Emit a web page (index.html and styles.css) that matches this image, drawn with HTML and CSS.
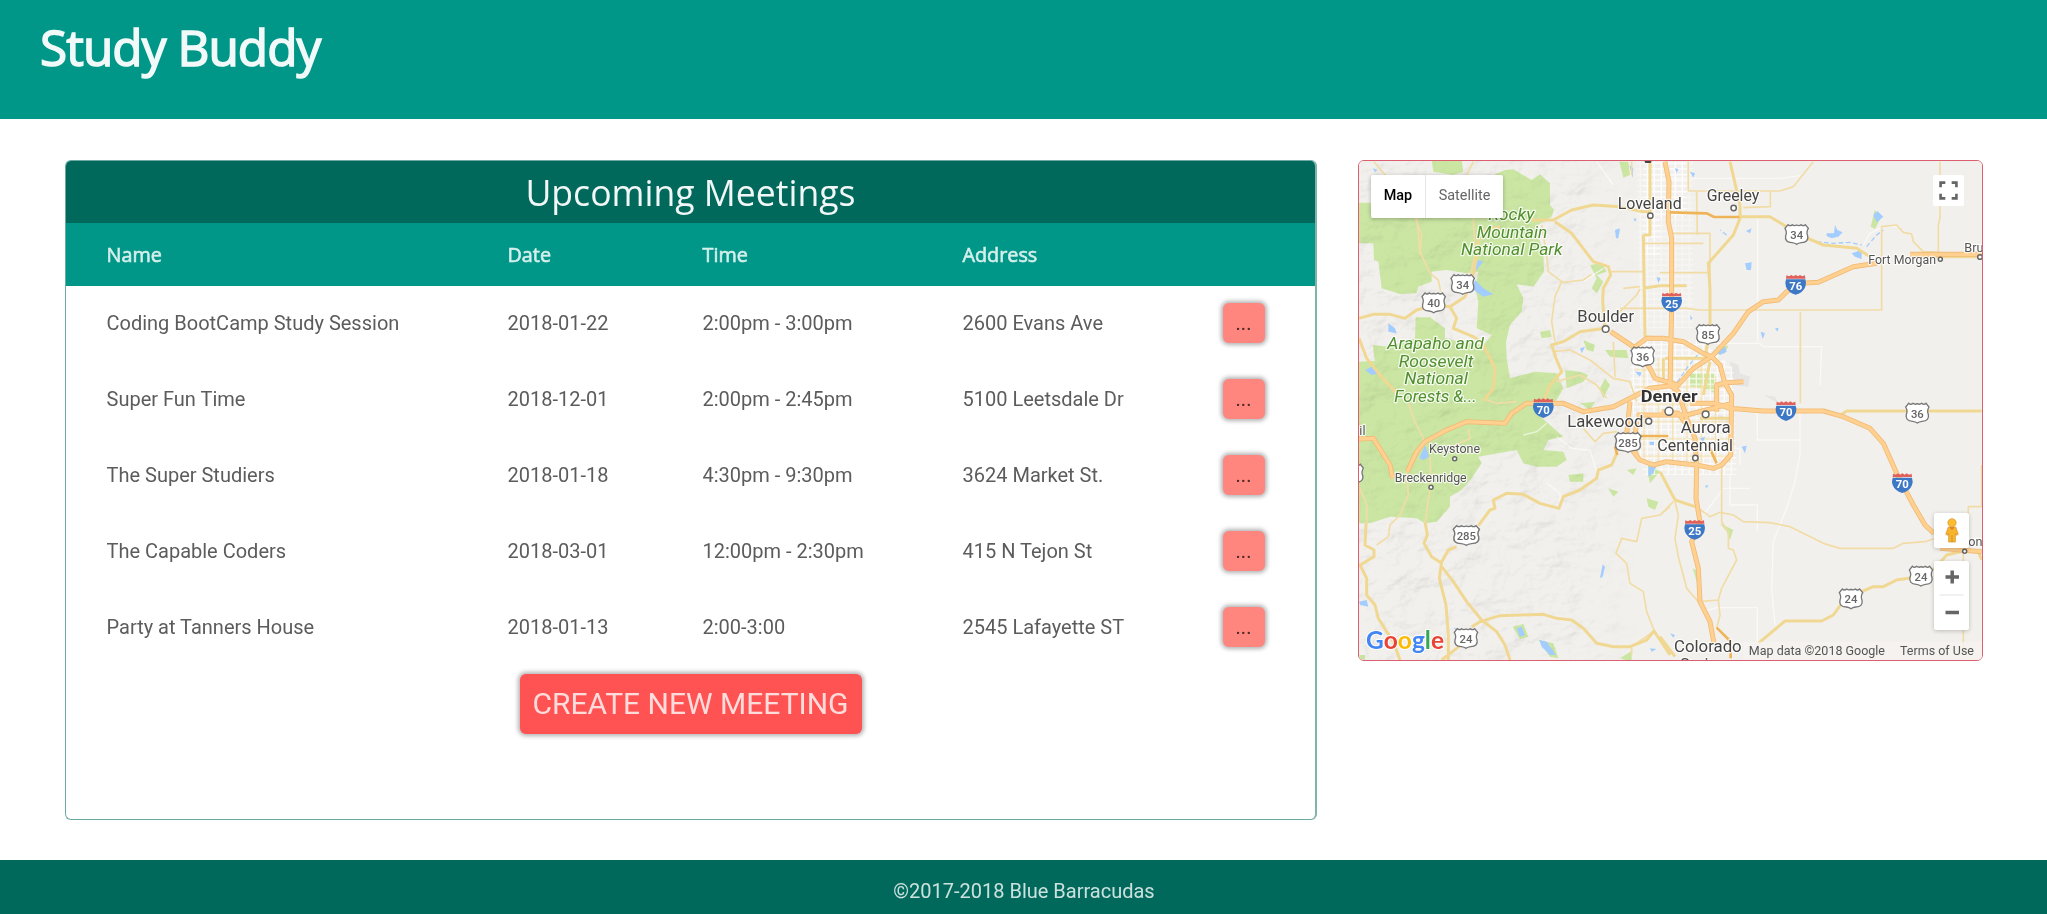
FILE: index.html
```html
<!DOCTYPE html>
<html lang="en">
<head>
<meta charset="utf-8">
<title>Study Buddy</title>
<link rel="stylesheet" href="styles.css">
</head>
<body>
<header class="site-header"><h1 class="brand">Study Buddy</h1></header>
<main class="content">
  <section class="meetings">
    <h2 class="meetings-title"><span>Upcoming Meetings</span></h2>
    <div class="row head"><span>Name</span><span>Date</span><span>Time</span><span>Address</span></div>
    <div class="row"><span>Coding BootCamp Study Session</span><span>2018-01-22</span><span>2:00pm - 3:00pm</span><span>2600 Evans Ave</span><button class="more">...</button></div>
    <div class="row"><span>Super Fun Time</span><span>2018-12-01</span><span>2:00pm - 2:45pm</span><span>5100 Leetsdale Dr</span><button class="more">...</button></div>
    <div class="row"><span>The Super Studiers</span><span>2018-01-18</span><span>4:30pm - 9:30pm</span><span>3624 Market St.</span><button class="more">...</button></div>
    <div class="row"><span>The Capable Coders</span><span>2018-03-01</span><span>12:00pm - 2:30pm</span><span>415 N Tejon St</span><button class="more">...</button></div>
    <div class="row"><span>Party at Tanners House</span><span>2018-01-13</span><span>2:00-3:00</span><span>2545 Lafayette ST</span><button class="more">...</button></div>
    <button class="create">CREATE NEW MEETING</button>
  </section>
  <section class="map">
    <svg class="map-canvas" viewBox="27 18 1869 1497" preserveAspectRatio="none">
      <defs>
        <filter id="relief" x="0" y="0" width="100%" height="100%">
          <feTurbulence type="fractalNoise" baseFrequency="0.011 0.014" numOctaves="4" seed="8"/>
          <feDiffuseLighting surfaceScale="22" diffuseConstant="1.15" lighting-color="#ffffff"><feDistantLight azimuth="225" elevation="58"/></feDiffuseLighting>
        </filter>
        <linearGradient id="fade"><stop offset="0.75" stop-color="#fff"/><stop offset="1" stop-color="#000"/></linearGradient>
        <mask id="west"><rect x="0" y="0" width="880" height="1520" fill="url(#fade)"/></mask>
        <pattern id="streets" width="21" height="17" patternUnits="userSpaceOnUse"><path d="M0 8H21M10 0V17" stroke="#fff" stroke-width="4"/></pattern>
        <pattern id="arterials" width="43" height="52" patternUnits="userSpaceOnUse"><path d="M0 20H43M22 0V52" stroke="#f6dfa3" stroke-width="4"/></pattern>
        <g id="us"><path d="M-26-29Q-20-23-13-29Q-7-24 0-28Q7-24 13-29Q20-23 26-29L35-18Q28-6 33 4Q37 24 14 25Q5 26 0 30Q-5 26-14 25Q-37 24-33 4Q-28-6-35-18Z" fill="#fff" stroke="#777" stroke-width="4"/></g>
        <g id="us3"><use href="#us" transform="scale(1.12 1)"/></g>
        <g id="inter"><path d="M-29-15H29Q33-3 29 7Q23 24 0 31Q-23 24-29 7Q-33-3-29-15Z" fill="#3c78c5"/><path d="M-28-27L-20-24L-13-28L-7-24L0-28L7-24L13-28L20-24L28-27L29-17H-29Z" fill="#e0605c"/></g>
      </defs>
      <rect width="1920" height="1540" fill="#f2f0ec"/>

      <g class="park">
        <path d="M245 15H335L340 50L310 60L250 50ZM27 143H62L245 100L375 100L430 60L465 45L490 43L545 75L570 58L600 85V150L612 165L605 185L555 215L580 290L582 350L550 395L500 388L520 430L515 470L480 510L468 560L470 610L480 670L555 650L620 655L640 700L620 735L560 775L600 810L640 845L595 855L580 885L640 890L650 915L620 935H560L520 925L500 885L385 905L395 925L365 970L335 1005L300 1025V1055L260 1100L225 1105L200 1090L120 1085L60 1105H27V620L75 618L68 570L115 575L195 550L197 487L240 487L285 520V550L330 560L400 570L425 540L380 520L385 440L375 400L385 350L350 355L290 345L245 350V380L205 395L200 415L150 417L95 400L85 320L72 315L70 265H27Z"/>
        <path d="M808 20H835L840 60L820 68ZM720 330L755 325L770 350L740 360L760 380L740 415L725 400L740 370ZM700 555L735 570L730 590L710 585ZM645 645L690 650L715 660L700 680L650 700ZM570 530L600 525L605 545L575 550ZM765 670L780 690L760 730L750 700ZM655 960L700 955L700 980L660 980ZM775 1000L805 1010L790 1025ZM890 1030L925 1040L915 1065L895 1055ZM1018 655H1092L1093 713L1060 700L1020 695ZM1574 165L1592 190L1575 222L1562 215ZM1110 1105L1150 1125L1140 1155L1130 1130ZM1028 1240L1050 1250L1040 1280ZM488 1415L520 1407L535 1445L510 1453ZM565 1455L610 1465L625 1510L600 1505ZM810 1510L845 1488V1520ZM27 1500H45V1520H27ZM890 935L900 985L930 950L900 920ZM830 945L860 940L850 960ZM690 745L735 740L720 765ZM765 585L830 585L835 610L780 605ZM1100 575L1135 572L1125 595L1090 600Z"/>
      </g>
      <rect class="relief" width="880" height="1520" filter="url(#relief)" mask="url(#west)"/>
      <path class="city" d="M1140 620L1165 630L1170 655L1200 665L1195 695L1150 690ZM1090 775L1140 790L1130 810ZM1240 720L1275 725L1285 745Z"/>

      <path d="M880 20H1010V190H930V300H880ZM840 555H1050L1150 640L1160 960H880L860 850L840 700Z" fill="url(#streets)" opacity=".75"/>
      <path d="M860 20H1030V520H870Z" fill="url(#streets)" opacity=".4"/>
      <path d="M850 610H1050L1145 720V925H880Z" fill="url(#arterials)" opacity=".8"/>
      <path class="minor" d="M740 20L790 90M930 70H1290L1350 62M1223 185V560M1060 565H1230L1240 575H1415L1410 690M1222 760V855H1350M1350 770V900L1335 980L1310 1060L1270 1160L1265 1300L1275 1410M1140 960V1050H1222V1130M1060 1080L1120 1000H1200M1060 1370L1100 1358H1222V1470M995 880H1170V930M1540 270L1560 235L1600 215L1650 215M620 845L665 880L720 885L740 950M590 985L630 1015V1040M520 840L560 830L590 805M700 380L760 340"/>

      <g class="water">
        <path d="M365 400L375 375L400 400L430 418L400 425L385 415ZM372 340L385 315L400 320L375 350ZM115 505L135 520L140 535L115 530ZM45 645L65 635L90 655L65 660ZM795 225L810 220L805 250H798ZM838 30L850 40L848 70ZM920 365L932 370L925 385ZM855 650L875 652L870 665ZM690 580L705 575L695 595ZM208 910L225 870L237 905L220 915ZM895 935L920 930L910 955L895 965ZM750 1270L758 1228L765 1235L758 1265ZM500 1420L515 1415L525 1440L510 1445ZM568 1455L590 1460L618 1500L600 1500L575 1475ZM27 1340L50 1335L55 1355L30 1350ZM1430 235L1452 235L1455 210L1462 225L1478 232L1465 245L1445 250L1430 243ZM1570 180L1582 168L1600 185L1580 202ZM1505 295L1535 285V312L1515 305ZM1185 325L1205 322L1203 345L1190 345ZM1020 50L1035 55L1030 68ZM975 40L985 42L980 55ZM1188 228L1205 220L1200 235ZM1232 530L1245 535L1238 552ZM1275 520L1286 518L1282 530ZM1100 590L1125 575L1130 590L1110 600ZM1175 875L1190 872L1185 895ZM1065 992L1075 990L1070 1000ZM960 1435L975 1440L970 1448ZM900 1480L920 1482L905 1490ZM1020 480L1028 490L1022 495ZM898 860H912V870H900ZM1050 850L1065 845L1060 860ZM312 1420L325 1418L320 1430ZM68 40L82 45L75 52ZM850 190L860 192L855 200Z"/>
        <path class="river" d="M1400 260L1450 265L1500 262L1535 270M1550 275L1580 240L1600 225M1130 240L1110 225M970 700L1010 640L1050 590"/>
      </g>

      <g class="yellow">
        <path d="M72 20L110 65M370 20L350 60M195 185L215 240L210 290L240 355L265 375L272 410M370 190L375 300L350 410M200 180L210 300M575 210L590 300L595 350L635 380L615 425L605 500L615 560M635 383L700 375L725 358M780 350H880M880 265H1060M845 20V60M820 400L870 395M805 475L860 420L870 402M810 460H1010L1050 465H1595V215L1640 210L1660 232L1685 237L1690 260L1720 290L1770 292M1770 20V190L1765 210V300M1015 108H1290L1330 95L1390 20M1261 108V155L1180 158M960 235H1080V470M1040 110L1042 240M1015 20V108M930 353H1075M1351 470V745M610 590L660 585L720 615L790 670L840 680L860 740M790 560L795 665M620 680L690 660L740 690L770 730M175 745L195 800L230 870M355 820L360 850L300 880M410 735L440 745L500 740M240 905L243 980L225 1105M170 950L175 1020L150 1080L120 1110L115 1145L80 1170M30 1000L50 1050V1110M700 820L735 860L760 835L800 830M960 1055L930 1080L875 1090L860 1160L815 1150L798 1195L830 1225L840 1285L880 1310L890 1370L912 1425M845 1500V1475L910 1430M975 1040L985 1080L975 1150L985 1205L1010 1300L1045 1340L1105 1335L1115 1300L1160 1215L1150 1185L1135 1180V1130L1115 1100V930M1045 1060L1080 1085L1110 1072L1150 1080L1180 1100L1260 1103L1320 1115L1420 1165L1470 1180H1630L1660 1165L1725 1160L1770 1145M1105 1335L1110 1380L1100 1420M1840 1190V1500M1895 930V1055H1855L1853 1130M930 1080L970 1040"/>
        <path class="wide" d="M27 490L70 478L120 478L165 490L200 465L255 450L300 455L345 425L372 350L380 300L390 230L450 215M545 195L610 195L665 165L730 150L810 155L880 170H900M615 200L665 235L730 320L775 335L782 360L760 400L758 440L765 520L690 530L640 560L605 570L618 610L635 650L600 690L580 740M300 455L320 490L310 520L370 545L395 560L410 590L435 640L430 700L400 738M27 550L50 610L90 660L140 715M880 240H900V170V20M880 240L885 545M1140 20L1170 150V190L1150 240L1075 325L1080 400V520L1065 610M1010 392H930L880 400M1168 185H1260L1310 215L1350 240L1420 270L1520 280L1560 305M1690 305H1890M1080 620L1060 720M945 610H1080M940 610V680M885 545L930 550M800 895L785 930L745 945L740 970L690 1005L640 1025L627 1060L570 1045L520 1018L470 1015L430 1035L435 1060L420 1065L385 1112M320 1175L295 1185L275 1220L268 1270L288 1350L295 1440V1515M275 1235L310 1280L350 1340L395 1395L440 1430L465 1470L480 1515M365 1415L390 1400L450 1382L580 1378L620 1390L665 1395L700 1420L740 1465L790 1475L840 1475L890 1455L912 1428L960 1500M225 1100L232 1140L222 1165L245 1205L275 1225M48 1105L45 1170L72 1185V1205L30 1230L50 1270V1320L75 1350L85 1390L110 1430L130 1460L150 1515M275 1515L320 1480L365 1440M930 950L975 1035L1035 1055M1465 785L1490 768H1895M1225 1465L1305 1398H1415L1450 1380L1475 1345M1535 1310L1570 1295H1600L1640 1275L1685 1268M1750 1245L1790 1200L1840 1188M1885 1190L1895 1215M1050 790L1145 790M930 1445L975 1505"/>
      </g>

      <path class="hw-edge" d="M945 20L957 80L955 200L965 250V460L960 690L985 710L1010 790L1035 850L1040 935L1038 1030L1050 1100L1025 1160L1045 1240L1050 1340L1080 1400L1092 1465M940 550L1000 560L1060 595L1085 605L1110 630L1125 685L1145 720L1142 900L1115 930L1090 940L1040 930L990 925L950 920L910 930L870 915L850 890L860 800M1020 745L1095 745L1140 760L1240 768H1420L1480 785L1560 820L1600 865L1640 955L1690 1050L1725 1110L1752 1135M1770 1180L1895 1190M975 700L1030 640L1085 605L1150 535L1195 470L1240 440L1285 435L1310 410L1350 385L1405 382L1510 335L1580 325M1680 298H1895M782 530L850 575L900 640L915 670L985 690M850 580L890 550L940 550M1100 770V690L1130 683L1180 680M27 852L70 850L95 890L120 930L128 970M172 950L200 890L225 860L290 825L350 800L465 805L485 775L530 745H640L700 770L790 755L830 735L900 700L980 690M840 740L830 840L860 900M935 770L985 775L1010 810M860 780L1010 780L1145 745"/>
      <path class="hw" d="M945 20L957 80L955 200L965 250V460L960 690L985 710L1010 790L1035 850L1040 935L1038 1030L1050 1100L1025 1160L1045 1240L1050 1340L1080 1400L1092 1465M940 550L1000 560L1060 595L1085 605L1110 630L1125 685L1145 720L1142 900L1115 930L1090 940L1040 930L990 925L950 920L910 930L870 915L850 890L860 800M1020 745L1095 745L1140 760L1240 768H1420L1480 785L1560 820L1600 865L1640 955L1690 1050L1725 1110L1752 1135M1770 1180L1895 1190M975 700L1030 640L1085 605L1150 535L1195 470L1240 440L1285 435L1310 410L1350 385L1405 382L1510 335L1580 325M1680 298H1895M782 530L850 575L900 640L915 670L985 690M850 580L890 550L940 550M1100 770V690L1130 683L1180 680M27 852L70 850L95 890L120 930L128 970M172 950L200 890L225 860L290 825L350 800L465 805L485 775L530 745H640L700 770L790 755L830 735L900 700L980 690M840 740L830 840L860 900M935 770L985 775L1010 810M860 780L1010 780L1145 745"/>
      <path class="amber" d="M960 172L1070 175L1092 186H1168M870 843H955M795 875L802 900M1075 870L1100 925M1100 1418L1142 1460V1510"/>

      <use href="#us" x="338" y="388"/><use href="#us" x="251" y="443"/><use href="#us" x="878" y="605"/><use href="#us" x="1340" y="238"/><use href="#us" x="1074" y="538"/><use href="#us" x="1702" y="774"/><use href="#us" x="1713" y="1263"/><use href="#us" x="1503" y="1331"/><use href="#us" x="348" y="1450"/><use href="#us" x="5" y="957"/>
      <use href="#us3" transform="translate(834 862)"/><use href="#us3" transform="translate(349 1141)"/>
      <use href="#inter" x="965" y="441"/><use href="#inter" x="1337" y="388"/><use href="#inter" x="580" y="758"/><use href="#inter" x="1308" y="767"/><use href="#inter" x="1657" y="983"/><use href="#inter" x="1034" y="1123"/>
      <g class="num"><text x="338" y="401">34</text><text x="251" y="456">40</text><text x="878" y="618">36</text><text x="1340" y="252">34</text><text x="1074" y="552">85</text><text x="1702" y="788">36</text><text x="1713" y="1277">24</text><text x="1503" y="1345">24</text><text x="348" y="1464">24</text><text x="834" y="876">285</text><text x="349" y="1155">285</text></g>
      <g class="num inum"><text x="965" y="458">25</text><text x="1337" y="405">76</text><text x="580" y="776">70</text><text x="1308" y="784">70</text><text x="1657" y="999">70</text><text x="1034" y="1140">25</text></g>

      <g class="dots"><circle cx="901" cy="182" r="8"/><circle cx="1151" cy="159" r="8"/><circle cx="767" cy="522" r="10"/><circle cx="957" cy="769" r="12"/><circle cx="896" cy="799" r="9"/><circle cx="1067" cy="778" r="10"/><circle cx="1036" cy="909" r="8"/><circle cx="1771" cy="313" r="6"/><circle cx="1890" cy="306" r="7"/><circle cx="314" cy="911" r="6"/><circle cx="243" cy="997" r="6"/><circle cx="1844" cy="1189" r="6"/></g>
      <rect x="884" y="15" width="20" height="9" rx="4" fill="#444"/>
      <g class="label">
        <text x="803" y="161" textLength="192" lengthAdjust="spacingAndGlyphs">Loveland</text><text x="1070" y="139" textLength="158" lengthAdjust="spacingAndGlyphs">Greeley</text><text x="682" y="501" textLength="170" lengthAdjust="spacingAndGlyphs">Boulder</text><text x="652" y="817" textLength="228" lengthAdjust="spacingAndGlyphs">Lakewood</text><text x="992" y="835" textLength="150" lengthAdjust="spacingAndGlyphs">Aurora</text><text x="922" y="888" textLength="227" lengthAdjust="spacingAndGlyphs">Centennial</text><text x="972" y="1492" textLength="203" lengthAdjust="spacingAndGlyphs">Colorado</text><text x="990" y="1546">Springs</text>
        <text class="capital" x="872" y="741" textLength="171" lengthAdjust="spacingAndGlyphs">Denver</text>
      </g>
      <g class="label town"><text x="1555" y="326" textLength="203" lengthAdjust="spacingAndGlyphs">Fort Morgan</text><text x="1843" y="290">Bru</text><text x="237" y="893" textLength="153" lengthAdjust="spacingAndGlyphs">Keystone</text><text x="134" y="980" textLength="216" lengthAdjust="spacingAndGlyphs">Breckenridge</text><text x="28" y="839">il</text><text x="1855" y="1173">on</text></g>
      <g class="label forest"><text x="415" y="196" textLength="138" lengthAdjust="spacingAndGlyphs">Rocky</text><text x="380" y="248" textLength="212" lengthAdjust="spacingAndGlyphs">Mountain</text><text x="333" y="301" textLength="305" lengthAdjust="spacingAndGlyphs">National Park</text><text x="112" y="583" textLength="290" lengthAdjust="spacingAndGlyphs">Arapaho and</text><text x="146" y="636" textLength="224" lengthAdjust="spacingAndGlyphs">Roosevelt</text><text x="163" y="688" textLength="191" lengthAdjust="spacingAndGlyphs">National</text><text x="133" y="740" textLength="247" lengthAdjust="spacingAndGlyphs">Forests &amp;...</text></g>
      <text class="google" x="48" y="1482" textLength="234" lengthAdjust="spacingAndGlyphs"><tspan fill="#4285f4">G</tspan><tspan fill="#ea4335">o</tspan><tspan fill="#fbbc05">o</tspan><tspan fill="#4285f4">g</tspan><tspan fill="#34a853">l</tspan><tspan fill="#ea4335">e</tspan></text>
    </svg>
    <div class="map-type"><span class="active">Map</span><span>Satellite</span></div>
    <button class="ctl fullscreen"><svg viewBox="0 0 18 18"><path d="M1.500 6V1.500H6M12 1.500H16.500V6M16.500 12V16.500H12M6 16.500H1.500V12" fill="none" stroke="#666" stroke-width="2.500"/></svg></button>
    <button class="ctl pegman"><svg viewBox="0 0 14 26"><path d="M3 9.500H11L13.500 17L11.500 18L10.500 16V25H3.500V16L2.500 18L.5 17Z" fill="#f9b52a" stroke="#d1902e" stroke-width=".7"/><path d="M4 9.500H10L7 12.500Z" fill="#e37e25"/><circle cx="7" cy="5" r="4.300" fill="#fbbd2f" stroke="#d1902e" stroke-width=".7"/><path d="M7 18V25" stroke="#d1902e"/></svg></button>
    <div class="ctl zoom"><svg viewBox="0 0 35 69"><path d="M11.500 16H25M18.200 9.500V22.500M11.500 51.500H25" stroke="#666" stroke-width="3.500"/><path d="M5.500 34H29.500" stroke="#e3e3e3"/></svg></div>
    <div class="legal"><span>Map data ©2018 Google</span><span>Terms of Use</span></div>
  </section>
</main>
<footer class="site-footer"><span>©2017-2018 Blue Barracudas</span></footer>
</body>
</html>
```
FILE: styles.css
```css
* { box-sizing: border-box; }
body { margin: 0; min-height: 914px; display: flex; flex-direction: column; background: #fff; font-family: Roboto, sans-serif; font-size: 20px; color: #5c5c5c; }
button { border: 0; padding: 0; font: inherit; }
.site-header { height: 119px; flex: none; background: #009788; padding-left: 40px; }
.brand { margin: 0; padding-top: 13px; font: 400 49.500px/68px "Open Sans", sans-serif; color: #f1faf9; letter-spacing: -.95px; -webkit-text-stroke: 1.500px #f1faf9; }
.content { height: 741px; flex: none; padding: 41px 64px 40px 65px; display: flex; justify-content: space-between; align-items: flex-start; }
.meetings { width: 1252px; height: 660px; border: 1px solid #6aaaa1; border-right: 2px solid #7fb3ac; border-radius: 6px; overflow: hidden; display: flex; flex-direction: column; }
.meetings-title { margin: 0; height: 61.500px; background: #00695b; color: #f0f7f6; font: 400 35.600px/62px "Open Sans", sans-serif; text-align: center; }
.row { height: 75.900px; flex: none; display: grid; grid-template-columns: 401px 195px 260px 260px 42px; align-items: center; padding-left: 40.500px; }
.head { height: 63px; background: #009788; color: #d5efec; font: 400 19.800px "Open Sans", sans-serif; -webkit-text-stroke: .6px #d5efec; }
.more { width: 42px; height: 40px; border-radius: 6px; background: #ff867f; color: #4d2826; box-shadow: 0 0 4px 2px rgba(0,0,0,.3); }
.create { align-self: center; margin: 9px 0 0 0; width: 342px; height: 60px; border-radius: 6px; background: #ff5252; color: #ffdcdc; font-size: 30px; box-shadow: 0 0 4px 2px rgba(0,0,0,.3); }
.site-footer { height: 54px; flex: none; background: #00695b; color: #cce1de; display: flex; justify-content: center; align-items: center; padding: 7px 0 0 1px; }

.map { position: relative; width: 625px; height: 501px; border: 1px solid #dc5f70; border-radius: 6px; overflow: hidden; }
.map-canvas { display: block; width: 100%; height: 100%; }
.park { fill: #cbe6a3; }
.relief { mix-blend-mode: multiply; opacity: .14; }
.city { fill: #e6e5e3; }
.water { fill: #a3ccff; }
.river { fill: none; stroke: #a3ccff; stroke-width: 4; stroke-dasharray: 14 8; }
.minor { fill: none; stroke: #fff; stroke-width: 4; opacity: .6; }
.yellow { fill: none; stroke: #f2dca6; stroke-width: 5; stroke-linejoin: round; }
.wide { stroke: #f0d893; stroke-width: 9; }
.hw-edge { fill: none; stroke: #f0bb77; stroke-width: 15; stroke-linejoin: round; }
.hw { fill: none; stroke: #ffd08f; stroke-width: 10; stroke-linejoin: round; }
.amber { fill: none; stroke: #efb458; stroke-width: 8; }
.num { font: 500 34px Roboto, sans-serif; fill: #666; text-anchor: middle; }
.inum { font-weight: 700; fill: #fff; }
.dots { fill: #fff; stroke: #666; stroke-width: 4.5; }
.label { font: 400 49px Roboto, sans-serif; fill: #444; stroke: #fff; stroke-opacity: .8; stroke-width: 7; stroke-linejoin: round; paint-order: stroke; }
.capital { font-weight: 700; font-size: 51px; fill: #333; }
.town { font-size: 38px; fill: #555; }
.forest { font-size: 49px; font-style: italic; fill: #508f2e; }
.google { font: 700 76px Lato, sans-serif; stroke: #fff; stroke-width: 6; paint-order: stroke; }
.map-type { position: absolute; left: 12px; top: 14px; height: 43px; display: flex; background: #fff; border-radius: 2px; box-shadow: 0 1px 4px rgba(0,0,0,.28); font-size: 14.400px; line-height: 42px; color: #666; }
.map-type span { width: 77px; text-align: center; }
.map-type .active { width: 55px; font-weight: 500; color: #000; border-right: 1px solid #e6e6e6; }
.ctl { position: absolute; background: #fff; border-radius: 2px; box-shadow: 0 1px 4px rgba(0,0,0,.22); display: flex; align-items: center; justify-content: center; }
.fullscreen { left: 573.500px; top: 14px; width: 31px; height: 31px; box-shadow: none; }
.fullscreen svg { width: 19px; height: 19px; }
.pegman { left: 575px; top: 352px; width: 35px; height: 35px; }
.pegman svg { width: 14px; height: 25px; }
.zoom { left: 575px; top: 400px; width: 35px; height: 69px; }
.zoom svg { width: 35px; height: 69px; }
.legal { position: absolute; right: 0; bottom: 0; height: 18px; padding: 0 8px 0 6px; display: flex; gap: 15px; background: rgba(245,243,240,.8); font-size: 12.500px; line-height: 18px; color: #555; white-space: nowrap; }
```
